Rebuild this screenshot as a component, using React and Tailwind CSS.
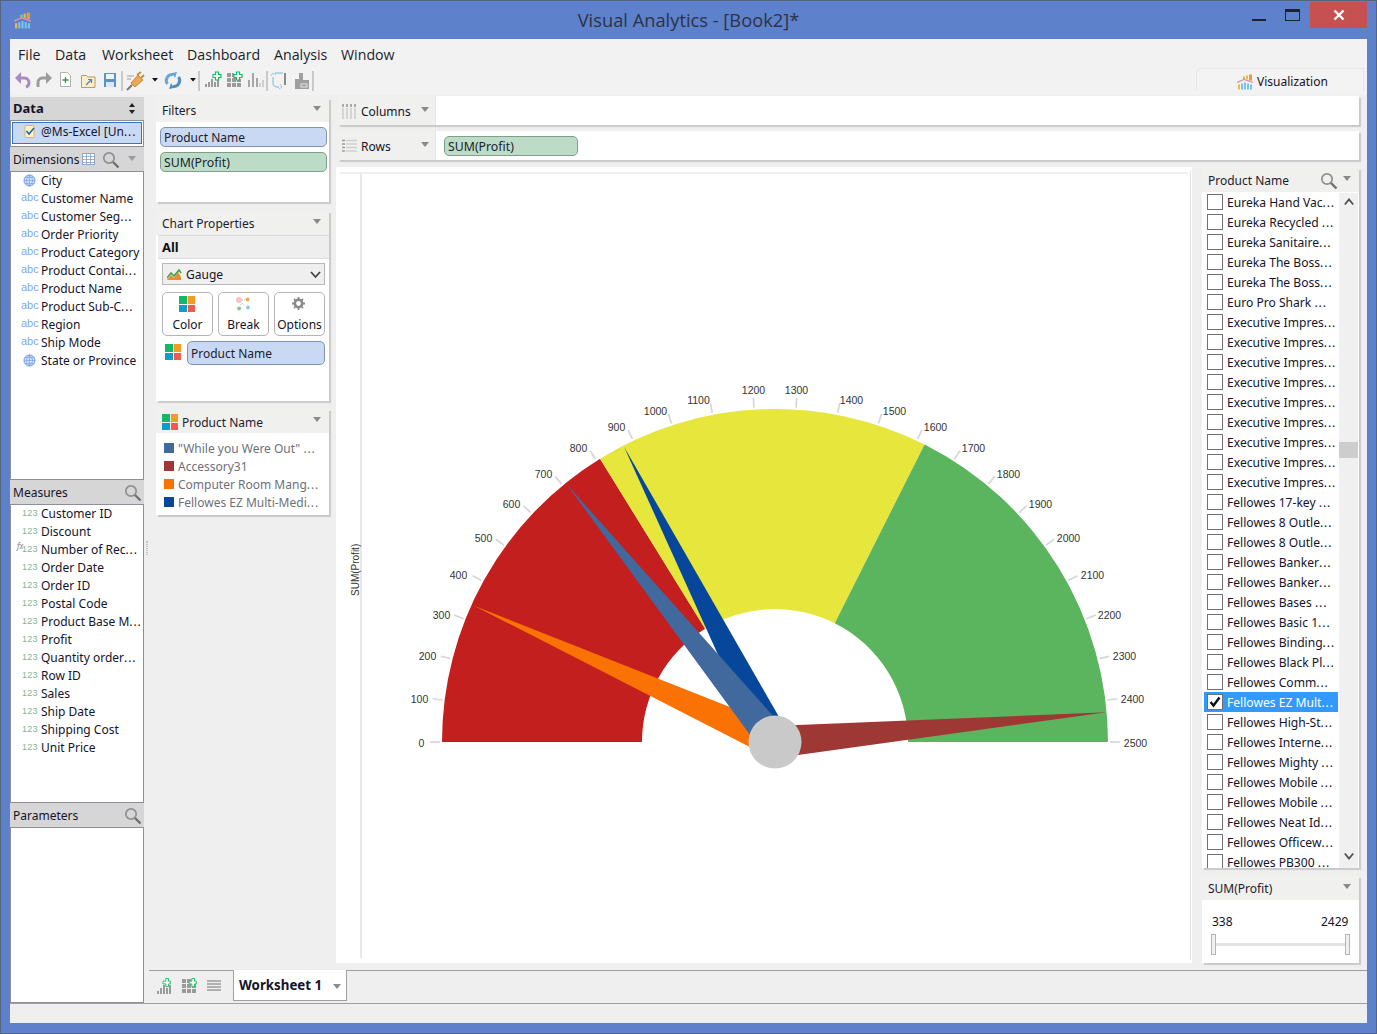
import React from "react";

const font = { fontFamily: '"Noto Sans", sans-serif' };
const dims = [["City","g"],["Customer Name"],["Customer Seg..."],["Order Priority"],["Product Category"],["Product Contai..."],["Product Name"],["Product Sub-C..."],["Region"],["Ship Mode"],["State or Province","g"]];
const meas = ["Customer ID","Discount","Number of Rec...","Order Date","Order ID","Postal Code","Product Base M...","Profit","Quantity order...","Row ID","Sales","Ship Date","Shipping Cost","Unit Price"];
const prods = ["Eureka Hand Vac...","Eureka Recycled ...","Eureka Sanitaire...","Eureka The Boss...","Eureka The Boss...","Euro Pro Shark ...","Executive Impres...","Executive Impres...","Executive Impres...","Executive Impres...","Executive Impres...","Executive Impres...","Executive Impres...","Executive Impres...","Executive Impres...","Fellowes 17-key ...","Fellowes 8 Outle...","Fellowes 8 Outle...","Fellowes Banker...","Fellowes Banker...","Fellowes Bases ...","Fellowes Basic 1...","Fellowes Binding...","Fellowes Black Pl...","Fellowes Comm...","Fellowes EZ Mult...","Fellowes High-St...","Fellowes Interne...","Fellowes Mighty ...","Fellowes Mobile ...","Fellowes Mobile ...","Fellowes Neat Id...","Fellowes Officew...","Fellowes PB300 ..."];
const labels = [[421,743],[419,699],[427,656],[441,615],[458,575],[483,538],[511,504],[543,474],[578,448],[616,427],[655,411],[698,400],[753,390],[796,390],[851,400],[894,411],[935,427],[973,448],[1008,474],[1040,504],[1068,538],[1092,575],[1109,615],[1124,656],[1132,699],[1135,743]];

const Dots = ({ t }) => t.endsWith("...") ? <>{t.slice(0, -3)}<span className="tracking-[0.9px]">...</span></> : <>{t}</>;

const Tri = ({ c = "#8a8a8a", x, y }) => <div className="absolute w-0 h-0 border-l-[4px] border-r-[4px] border-t-[5px] border-l-transparent border-r-transparent" style={{ left: x, top: y, borderTopColor: c }} />;

function Magnifier({ x, y }) {
  return <svg className="absolute" style={{ left: x, top: y }} width="18" height="18" viewBox="0 0 18 18" fill="none"><circle cx="7" cy="7" r="5.2" stroke="#8f8f8f" strokeWidth="1.7" /><path d="M11 11l5.5 5.5" stroke="#6f6f6f" strokeWidth="2.4" /></svg>;
}
function Quad({ x, y, s = 7.5, g = 1 }) {
  return <div className="absolute grid grid-cols-2" style={{ left: x, top: y, gap: g, width: s * 2 + g }}>
    <div className="bg-[#12b76a]" style={{ height: s }} /><div className="bg-[#f59a23]" style={{ height: s }} /><div className="bg-[#0f9cc8]" style={{ height: s }} /><div className="bg-[#ef5b4c]" style={{ height: s }} />
  </div>;
}
function Panel({ x, y, w, h, title, children, tx = 6, lh = 26, noArrow }) {
  return <div className="absolute bg-white shadow-[2px_2px_1px_#c9c9c9] rounded-tl-[5px]" style={{ left: x, top: y, width: w, height: h }}>
    <div className="absolute left-0 top-0 right-0 h-[24px] bg-[#f0f0ef] rounded-tl-[5px] text-[12px] text-[#1c1c2c]" style={{ paddingLeft: tx, lineHeight: lh + "px" }}>{title}</div>
    {!noArrow && <Tri x={w - 16} y={8} />}
    {children}
  </div>;
}
function Pill({ x, y, w, h = 20, kind = "blue", children }) {
  const cls = kind === "blue" ? "bg-[#c9d9f3] border-[#8093b4] text-[12px]" : "bg-[#bcdcc8] border-[#7f9f8c] text-[12.3px]";
  return <div className={"absolute rounded-[5px] border leading-[20px] pl-[3px] text-[#1c1c2c] " + cls} style={{ left: x, top: y, width: w, height: h }}>{children}</div>;
}
function Logo({ x, y, s = 18 }) {
  return <svg className="absolute" style={{ left: x, top: y }} width={s} height={s} viewBox="0 0 16 15">
    <rect x="1" y="10" width="2" height="5" fill="#f6b73c" /><rect x="4" y="9" width="2" height="6" fill="#77c4ef" /><rect x="7" y="8" width="2" height="7" fill="#77c4ef" /><rect x="10" y="9" width="2" height="6" fill="#77c4ef" /><rect x="13" y="10" width="2" height="5" fill="#77c4ef" />
    <rect x="6" y="2" width="2" height="3" fill="#8ccf6b" /><rect x="9" y="1" width="2" height="4" fill="#f6b73c" /><rect x="12" y="0" width="3" height="6" fill="#f29a2e" />
    <path d="M0 8l7-3 9 3" fill="none" stroke="#d592b2" strokeWidth="1.300" />
  </svg>;
}
const G = ({ x, w = 3, h, b = 16 }) => <rect x={x} y={b - h} width={w} height={h} fill="#9a9a9a" />;
function BarsPlus({ x, y }) {
  return <svg className="absolute" style={{ left: x, top: y }} width="17" height="17" viewBox="0 0 17 17">
    <G x={1} w={2} h={3} /><G x={4} w={2} h={6} /><G x={7} w={2} h={9} /><G x={10} w={2} h={6} /><G x={13} w={2} h={9} />
    <path d="M9 3h3V0h3v3h2v3h-2v3h-3V6H9z" fill="#fff" stroke="#10c060" strokeWidth="1" transform="translate(-1 0.5) scale(.9)" />
  </svg>;
}
function GridPlus({ x, y }) {
  return <svg className="absolute" style={{ left: x, top: y }} width="17" height="17" viewBox="0 0 17 17">
    {[[1,1],[1,6],[1,11],[6,6],[6,11],[11,11],[6,1],[11,6]].map(([a, b], i) => <rect key={i} x={a} y={b} width="4" height="4" fill="#9a9a9a" />)}
    <path d="M9 3h3V0h3v3h2v3h-2v3h-3V6H9z" fill="#fff" stroke="#10c060" strokeWidth="1" transform="translate(0 0.5) scale(.9)" />
  </svg>;
}

function Toolbar() {
  return <svg className="absolute left-[10px] top-[65px]" width="310" height="30" viewBox="0 0 310 30" fill="none">
    {/* undo */}
    <path d="M5 13l6-6v12z" fill="#a98bc4" /><path d="M10 13h4.500a4.500 4.500 0 0 1 4.500 4.500c0 2.500-1.500 4-3 4.500" stroke="#a98bc4" strokeWidth="3" />
    {/* redo */}
    <path d="M42 13l-6-6v12z" fill="#9c9c9c" /><path d="M37 13h-4.500a4.500 4.500 0 0 0-4.500 4.500V22" stroke="#9c9c9c" strokeWidth="3" />
    {/* new */}
    <path d="M50.500 7.500h7l3 3v11h-10z" fill="#fff" stroke="#b0b0b0" /><path d="M52.500 15h6M55.500 12v6" stroke="#2f9a45" strokeWidth="1.300" />
    {/* folder */}
    <path d="M71.500 10.500h5l1.500 1.500h7v10.500H71.500z" fill="#fbeecd" stroke="#c29a5c" /><path d="M76 20l5-5M78 14.500h3.500V18" stroke="#4a86c0" strokeWidth="1.200" />
    {/* save */}
    <rect x="94" y="8" width="12" height="14" fill="#5b93c6" /><rect x="96" y="9" width="8" height="5" fill="#eef3f8" /><rect x="96" y="17" width="8" height="5" fill="#dfe8f0" />
    <path d="M112 6v20" stroke="#adadad" strokeWidth="1.200" />
    {/* plug */}
    <path d="M117 25l5-5" stroke="#777" strokeWidth="2" /><path d="M117 11h7M117 14h4" stroke="#999" strokeWidth="1.200" /><path d="M121 18l7-8 5 5-8 7z" fill="#eca655" stroke="#c98a3c" /><path d="M127 10l4-3M131 13l3-3" stroke="#c98a3c" strokeWidth="1.800" />
    <path d="M142 13h6l-3 3.500z" fill="#111" />
    {/* sync */}
    <path d="M163 9.500A6 6 0 0 0 157.500 19" stroke="#6aa6d6" strokeWidth="3" /><path d="M162 8l5-1-2 6z" fill="#6aa6d6" />
    <path d="M163 21.500A6 6 0 0 0 168.500 12" stroke="#4f8fc4" strokeWidth="3" /><path d="M164 23l-5 1 2-6z" fill="#4f8fc4" />
    <path d="M180 13h6l-3 3.500z" fill="#111" />
    <path d="M189 6v20" stroke="#adadad" strokeWidth="1.200" />
    {/* bars + */}
    <path d="M195 19h2v3h-2zM198 17h2v5h-2zM201 14h2v8h-2zM204 17h2v5h-2zM207 14h2v8h-2z" fill="#9a9a9a" />
    <path d="M203 9.500h2.500V7h3v2.500h2.500v3h-2.500V15h-3v-2.500H203z" fill="#fff" stroke="#10c060" strokeWidth="1.200" />
    {/* grid + */}
    <path d="M217 8h4v4h-4zM222 8h2v4h-2zM217 13h4v4h-4zM217 18h4v4h-4zM222 18h4v4h-4zM227 18h4v4h-4zM227 14h4v3h-4zM222 13h4v4h-4z" fill="#9a9a9a" />
    <path d="M224 9.500h2.500V7h3v2.500h2.500v3h-2.500V15h-3v-2.500H224z" fill="#fff" stroke="#10c060" strokeWidth="1.200" />
    {/* gray bars */}
    <path d="M238 15h2v7h-2zM242 8h2v14h-2zM246 13h2v9h-2z" fill="#a6a6a6" /><path d="M249 18h2v4h-2zM252 15h2v7h-2z" fill="#cfcfcf" />
    <path d="M257 6v20" stroke="#adadad" strokeWidth="1.200" />
    {/* filter frame */}
    <path d="M265 8h8M263 12v6c0 2 2 4 4 4h2" stroke="#9fc9e4" strokeWidth="1.400" /><path d="M261 11l2-3 3 2M269 24l3-2-2-3" stroke="#9fc9e4" /><path d="M274 8h2v12h-2z" fill="#8a8a8a" />
    {/* sort */}
    <path d="M285 14h4V8h4v7h6v9h-14z" fill="#9f9f9f" /><rect x="291" y="19" width="6" height="3" fill="none" stroke="#e6e6e6" />
    <path d="M303 6v20" stroke="#adadad" strokeWidth="1.200" />
  </svg>;
}

function Chart() {
  const cx = 775, cy = 742, R = 333, r = 133;
  const pt = (rad, deg) => { const a = deg * Math.PI / 180; return [cx - rad * Math.cos(a), cy - rad * Math.sin(a)]; };
  const seg = (a, b, c) => { const p1 = pt(R, a), p2 = pt(R, b), p3 = pt(r, b), p4 = pt(r, a); return <path key={c} d={`M${p1[0]} ${p1[1]}A${R} ${R} 0 0 1 ${p2[0]} ${p2[1]}L${p3[0]} ${p3[1]}A${r} ${r} 0 0 0 ${p4[0]} ${p4[1]}Z`} fill={c} />; };
  const needle = (tx, ty, c) => { const dx = tx - cx, dy = ty - cy, l = Math.hypot(dx, dy), w = 16; const nx = -dy / l * w, ny = dx / l * w; return <polygon key={c} points={`${tx},${ty} ${cx + nx},${cy + ny} ${cx - nx},${cy - ny}`} fill={c} />; };
  return <svg className="absolute left-0 top-0" width="1377" height="1034" viewBox="0 0 1377 1034" style={{ fontFamily: '"Liberation Sans", sans-serif' }}>
    {seg(0, 58.3, "#c41f1f")}{seg(58.3, 116.7, "#e6e63c")}{seg(116.7, 180, "#5bb45e")}
    {labels.map(([x, y], i) => { const d = i * 7.2, a = pt(335, d), b = pt(345, d); return <g key={i}>
      <line x1={a[0]} y1={a[1]} x2={b[0]} y2={b[1]} stroke="#d6d6d6" strokeWidth="1.700" />
      <text x={x + 0.5} y={y + 3.500} fontSize="10.500" fill="#333" textAnchor="middle">{i * 100}</text></g>; })}
    {needle(624, 446.7, "#07479b")}{needle(474, 605.7, "#fa7203")}{needle(1106.7, 712.3, "#9e3835")}{needle(566.7, 484.3, "#41699e")}
    <circle cx={cx} cy={cy} r="26.500" fill="#c9c9c9" />
  </svg>;
}

export default function App() {
  return <div className="relative w-[1377px] h-[1034px] overflow-hidden bg-[#5e81cc] text-[12px] text-[#14142a]" style={font}>
    <div className="absolute inset-0 border border-[#56657f] pointer-events-none z-10" />
    <Logo x={14} y={12} s={17} />
    <div className="absolute left-0 right-0 top-[7px] text-center text-[18.3px] leading-[26px] text-[#2c3345]" style={{ fontFamily: '"Open Sans", sans-serif' }}>Visual Analytics - [Book2]*</div>
    <div className="absolute left-[1252px] top-[19px] w-[14px] h-[2px] bg-[#1d2230]" />
    <div className="absolute left-[1285px] top-[9px] w-[15px] h-[12px] border border-[#1d2230] border-t-[3px]" />
    <div className="absolute left-[1310px] top-[2px] w-[57px] h-[26px] bg-[#c75050] flex items-center justify-center">
      <svg width="12" height="12" viewBox="0 0 12 12"><path d="M1.500 1.500l9 9M10.500 1.500l-9 9" stroke="#fff" strokeWidth="2.400" /></svg>
    </div>

    <div className="absolute left-[10px] top-[39px] w-[1357px] h-[984px] bg-[#efefef] overflow-hidden" />
    <div className="absolute left-[10px] top-[39px] w-[1357px] h-[28px] bg-[#f2f2f2]" />
    <div className="absolute left-[18px] top-[44px] flex text-[14.2px] leading-[22px] text-[#1c1c2c]" style={{ fontFamily: '"Open Sans", sans-serif' }}>
      <span className="w-[37px]">File</span><span className="w-[47px]">Data</span><span className="w-[85px]">Worksheet</span><span className="w-[87px]">Dashboard</span><span className="w-[67px]">Analysis</span><span>Window</span>
    </div>
    <div className="absolute left-[10px] top-[67px] w-[1357px] h-[28px] bg-[#f2f2f2]" />
    <Toolbar />
    <div className="absolute left-[1196px] top-[68px] w-[168px] h-[23px] bg-[#f3f3f3] border-l border-t border-r border-[#e6e6e6] rounded-tl-[6px] text-[12px] leading-[26px] pl-[60px]">Visualization</div>
    <Logo x={1237} y={74} s={16} />

    {/* Left column */}
    <div className="absolute left-[10px] top-[97px] w-[134px] h-[23px] bg-[#d6d6d6] font-bold text-[13px] leading-[23px] pl-[3px]">Data</div>
    <svg className="absolute left-[129px] top-[103px]" width="6" height="11" viewBox="0 0 6 11"><path d="M3 0l3 4H0zM3 11l3-4H0z" fill="#222" /></svg>
    <div className="absolute left-[10px] top-[120px] w-[134px] h-[27px] bg-white border border-[#8a8f98]">
      <div className="absolute left-[1px] top-[1px] w-[130px] h-[22px] bg-[#c9d9f3] border border-[#3a72c4] text-[12px] leading-[18px] pl-[28px] whitespace-nowrap"><Dots t="@Ms-Excel [Un..." /></div>
      <svg className="absolute left-[13px] top-[3px]" width="12" height="15" viewBox="0 0 12 15"><rect x="1" y="1.500" width="9" height="12" rx="1" fill="#fbf3c4" stroke="#e0b94a" /><path d="M2.500 7l2.500 3 5-6" stroke="#2a5fa8" strokeWidth="1.500" fill="none" /></svg>
    </div>
    <div className="absolute left-[10px] top-[147px] w-[134px] h-[25px] bg-[#d6d6d6] leading-[25px] pl-[3px] text-[12px]">Dimensions</div>
    <svg className="absolute left-[82px] top-[153px]" width="13" height="12" viewBox="0 0 13 12"><rect x=".5" y=".5" width="12" height="11" fill="#fff" stroke="#8fa8c6" /><path d="M.5 3.500h12M.5 6.500h12M.5 9.500h12M4.500 .5v11M8.500 .5v11" stroke="#8fa8c6" strokeWidth=".9" /></svg>
    <Magnifier x={102} y={151} />
    <Tri x={128} y={156} c="#9a9a9a" />
    <div className="absolute left-[10px] top-[171px] w-[134px] h-[309px] bg-white border border-[#8a8f98]" />
    {dims.map(([n, g], i) => <div key={i} className="absolute left-[41px] h-[18px] leading-[18px] whitespace-nowrap" style={{ top: 172 + i * 18 }}><Dots t={n} /></div>)}
    {dims.map(([n, g], i) => g
      ? <svg key={i} className="absolute left-[23px]" style={{ top: 174 + i * 18 }} width="13" height="13" viewBox="0 0 13 13" fill="none"><circle cx="6.500" cy="6.500" r="5.500" fill="#cfe0f7" stroke="#6f9be0" /><path d="M1 6.500h11M6.500 1v11M2 3.500h9M2 9.500h9M6.500 1c-4 3-4 8 0 11M6.500 1c4 3 4 8 0 11" stroke="#6f9be0" strokeWidth=".6" /></svg>
      : <div key={i} className="absolute left-[21px] text-[11px] leading-[14px] text-[#7fa9e8]" style={{ top: 172 + i * 18, fontFamily: '"Liberation Sans", sans-serif' }}>abc</div>)}

    <div className="absolute left-[10px] top-[480px] w-[134px] h-[25px] bg-[#d6d6d6] leading-[25px] pl-[3px]">Measures</div>
    <Magnifier x={124} y={484} />
    <div className="absolute left-[10px] top-[504px] w-[134px] h-[299px] bg-white border border-[#8a8f98]" />
    {meas.map((n, i) => <React.Fragment key={i}>
      <div className="absolute left-[41px] h-[18px] leading-[18px] whitespace-nowrap" style={{ top: 505 + i * 18 }}><Dots t={n} /></div>
      <div className="absolute left-[22px] text-[9px] leading-[12px] tracking-[0.2px] text-[#7fb598]" style={{ top: 507 + i * 18, fontFamily: '"Liberation Sans", sans-serif' }}>123</div>
    </React.Fragment>)}
    <div className="absolute left-[17px] top-[541px] text-[8px] leading-[10px] italic text-[#8a8a8a]">fx</div>
    <div className="absolute left-[10px] top-[803px] w-[134px] h-[25px] bg-[#d6d6d6] leading-[25px] pl-[3px]">Parameters</div>
    <Magnifier x={124} y={807} />
    <div className="absolute left-[10px] top-[827px] w-[134px] h-[176px] bg-white border border-[#8a8f98]" />
    <div className="absolute left-[146px] top-[541px] w-[2px] h-[14px] border-l border-r border-dotted border-[#c4c4c4]" />

    {/* Filters */}
    <Panel x={156} y={98} w={173} h={104} title="Filters" />
    <Pill x={160} y={127} w={167}>Product Name</Pill>
    <Pill x={160} y={152} w={167} kind="green">SUM(Profit)</Pill>

    <Panel x={156} y={211} w={173} h={190} title="Chart Properties">
      <div className="absolute left-[2px] top-[24px] right-0 h-[24px] bg-[#eeeeef] border-b border-t border-[#dcdcdc] font-bold text-[13px] leading-[23px] pl-[4px] text-[#111]">All</div>
    </Panel>
    <div className="absolute left-[162px] top-[263px] w-[163px] h-[22px] bg-[#efefef] border border-[#b8b8b8] leading-[21px] pl-[23px]">Gauge</div>
    <svg className="absolute left-[167px] top-[269px]" width="15" height="12" viewBox="0 0 15 12"><path d="M0 11l4-5 3 3 4-6 3 5v3z" fill="#ee8a2f" /><path d="M0 9l4-5 3 3 5-6 2 3" stroke="#3fa34d" strokeWidth="1.600" fill="none" /></svg>
    <svg className="absolute left-[310px] top-[271px]" width="11" height="8" viewBox="0 0 11 8" fill="none"><path d="M1 1l4.500 5L10 1" stroke="#444" strokeWidth="1.800" /></svg>
    {[[162, 51, "Color"], [218, 51, "Break"], [274, 51, "Options"]].map(([x, w, t]) => <div key={t} className="absolute top-[292px] h-[44px] bg-white border border-[#b4b4b4] rounded-[5px] text-center leading-[18px] pt-[23px]" style={{ left: x, width: w }}>{t}</div>)}
    <Quad x={179} y={296} />
    <svg className="absolute left-[235px] top-[296px]" width="16" height="16" viewBox="0 0 16 16"><circle cx="4" cy="4" r="3" fill="#f7c4c0" /><circle cx="12.500" cy="3.500" r="2" fill="#f5a94e" /><circle cx="4" cy="12.500" r="2" fill="#8cc48c" /><circle cx="13" cy="11.500" r="2" fill="#8ec7f2" /><path d="M7 4h3M7 7l3 3M6 8l-1 2" stroke="#bbb" strokeDasharray="1 1" /></svg>
    <svg className="absolute left-[292px] top-[297px]" width="13" height="13" viewBox="0 0 13 13"><circle cx="6.500" cy="6.500" r="3.700" fill="none" stroke="#8a8a8a" strokeWidth="2.600" /><path d="M6.500 0v13M0 6.500h13M2 2l9 9M11 2l-9 9" stroke="#8a8a8a" strokeWidth="1.800" strokeDasharray="2 9 2 0" /></svg>
    <Quad x={165} y={344} />
    <Pill x={187} y={341} w={138} h={24}><span className="leading-[23px] block">Product Name</span></Pill>

    <Panel x={156} y={409} w={173} h={106} title="Product Name" tx={26} lh={28} />
    <Quad x={162} y={414} />
    {[['"While you Were Out" ...', "#41699e"], ["Accessory31", "#9e3835"], ["Computer Room Mang...", "#fa7203"], ["Fellowes EZ Multi-Medi...", "#07479b"]].map(([t, c], i) => <React.Fragment key={i}>
      <div className="absolute left-[164px] w-[10px] h-[10px]" style={{ top: 443 + i * 18, background: c }} />
      <div className="absolute left-[178px] leading-[18px] whitespace-nowrap text-[#6f6f7a]" style={{ top: 440 + i * 18 }}><Dots t={t} /></div>
    </React.Fragment>)}

    {/* Columns/Rows */}
    <div className="absolute left-[338px] top-[96px] w-[1021px] h-[29px] bg-white rounded-tl-[5px] shadow-[2px_2px_1px_#c9c9c9]" />
    <div className="absolute left-[338px] top-[96px] w-[98px] h-[29px] bg-[#f0f0ee] rounded-tl-[5px] border-r border-[#e6e6dc] leading-[31px] pl-[23px]">Columns</div>
    <Tri x={421} y={107} />
    <svg className="absolute left-[342px] top-[104px]" width="14" height="15" viewBox="0 0 14 15"><path d="M1 0v3M5 0v3M9 0v3M13 0v3" stroke="#9a9a9a" strokeWidth="1.600" /><path d="M1 4v11M5 4v11M9 4v11M13 4v11" stroke="#cfcfcf" strokeWidth="1.600" /></svg>
    <div className="absolute left-[338px] top-[131px] w-[1021px] h-[29px] bg-white rounded-tl-[5px] shadow-[2px_2px_1px_#c9c9c9]" />
    <div className="absolute left-[338px] top-[131px] w-[98px] h-[29px] bg-[#f0f0ee] rounded-tl-[5px] border-r border-[#e6e6dc] leading-[31px] pl-[23px]">Rows</div>
    <Tri x={421} y={142} />
    <svg className="absolute left-[342px] top-[139px]" width="15" height="14" viewBox="0 0 15 14"><path d="M0 1.500h3M0 5h3M0 8.500h3M0 12h3" stroke="#9a9a9a" strokeWidth="1.600" /><path d="M4 1.500h11M4 5h11M4 8.500h11M4 12h11" stroke="#cfcfcf" strokeWidth="1.600" /></svg>
    <Pill x={444} y={136} w={134} kind="green">SUM(Profit)</Pill>

    {/* Chart area */}
    <div className="absolute left-[336px] top-[167px] w-[856px] h-[796px] bg-white" />
    <div className="absolute left-[360px] top-[173px] w-[2px] h-[785px] bg-[#e8e8e8]" />
    <div className="absolute left-[340px] top-[172px] w-[848px] h-[2px] bg-[#eeeeee]" />
    <div className="absolute left-[1190px] top-[170px] w-[1px] h-[790px] bg-[#e2e2e2]" />
    <div className="absolute left-[350px] top-[596px] origin-top-left -rotate-90 text-[10px] leading-[12px] whitespace-nowrap text-[#333]" style={{ fontFamily: '"Liberation Sans", sans-serif' }}>SUM(Profit)</div>
    <Chart />

    {/* Right panel */}
    <Panel x={1202} y={168} w={157} h={700} title="Product Name" />
    <Magnifier x={1320} y={172} />
    <div className="absolute left-[1202px] top-[193px] w-[157px] h-[675px] overflow-hidden">
      {prods.map((p, i) => <React.Fragment key={i}>
        <div className={"absolute left-[2px] w-[134px] h-[20px] whitespace-nowrap text-[12.1px] leading-[21px] pl-[23px] " + (i === 25 ? "bg-[#3399ff] text-white" : "")} style={{ top: i * 20 - 1 }}><Dots t={p} /></div>
        <div className="absolute left-[5px] w-[16px] h-[16px] bg-white border border-[#707070]" style={{ top: i * 20 + 1 }}>
          {i === 25 && <svg width="14" height="14" viewBox="0 0 14 14"><path d="M2.500 7l3 3.500L11.500 2.500" stroke="#111" strokeWidth="2.400" fill="none" /></svg>}
        </div>
      </React.Fragment>)}
    </div>
    <div className="absolute left-[1339px] top-[193px] w-[19px] h-[675px] bg-[#f0f0f0]" />
    <div className="absolute left-[1339px] top-[442px] w-[19px] h-[16px] bg-[#cdcdcd]" />
    <svg className="absolute left-[1344px] top-[198px]" width="10" height="8" viewBox="0 0 10 8" fill="none"><path d="M.8 6.500L5 1.500l4.200 5" stroke="#505050" strokeWidth="1.800" /></svg>
    <svg className="absolute left-[1344px] top-[852px]" width="10" height="8" viewBox="0 0 10 8" fill="none"><path d="M.8 1.500L5 6.500l4.200-5" stroke="#505050" strokeWidth="1.800" /></svg>

    <Panel x={1202} y={876} w={157} h={87} title="SUM(Profit)" />
    <div className="absolute left-[1212px] top-[913px] leading-[18px]">338</div>
    <div className="absolute left-[1321px] top-[913px] leading-[18px]">2429</div>
    <div className="absolute left-[1215px] top-[943px] w-[131px] h-[3px] bg-[#e3e3e3]" />
    <div className="absolute left-[1211px] top-[934px] w-[5px] h-[21px] bg-[#f0f0f0] border border-[#b4b4b4]" />
    <div className="absolute left-[1345px] top-[934px] w-[5px] h-[21px] bg-[#f0f0f0] border border-[#b4b4b4]" />

    {/* Bottom */}
    <div className="absolute left-[149px] top-[970px] w-[1218px] h-px bg-[#a0a0a0]" />
    <div className="absolute left-[233px] top-[970px] w-[114px] h-[31px] bg-white border-l border-r border-b border-[#a0a0a0] border-t-white font-bold text-[13.3px] leading-[31px] pl-[5px]">Worksheet 1</div>
    <Tri x={333} y={984} />
    <BarsPlus x={156} y={978} />
    <GridPlus x={181} y={978} />
    <svg className="absolute left-[207px] top-[980px]" width="14" height="11" viewBox="0 0 14 11"><path d="M0 1h14M0 4h14M0 7h14M0 10h14" stroke="#9a9a9a" strokeWidth="1.600" /></svg>
    <div className="absolute left-[10px] top-[1003px] w-[1357px] h-px bg-[#a0a0a0]" />
  </div>;
}
